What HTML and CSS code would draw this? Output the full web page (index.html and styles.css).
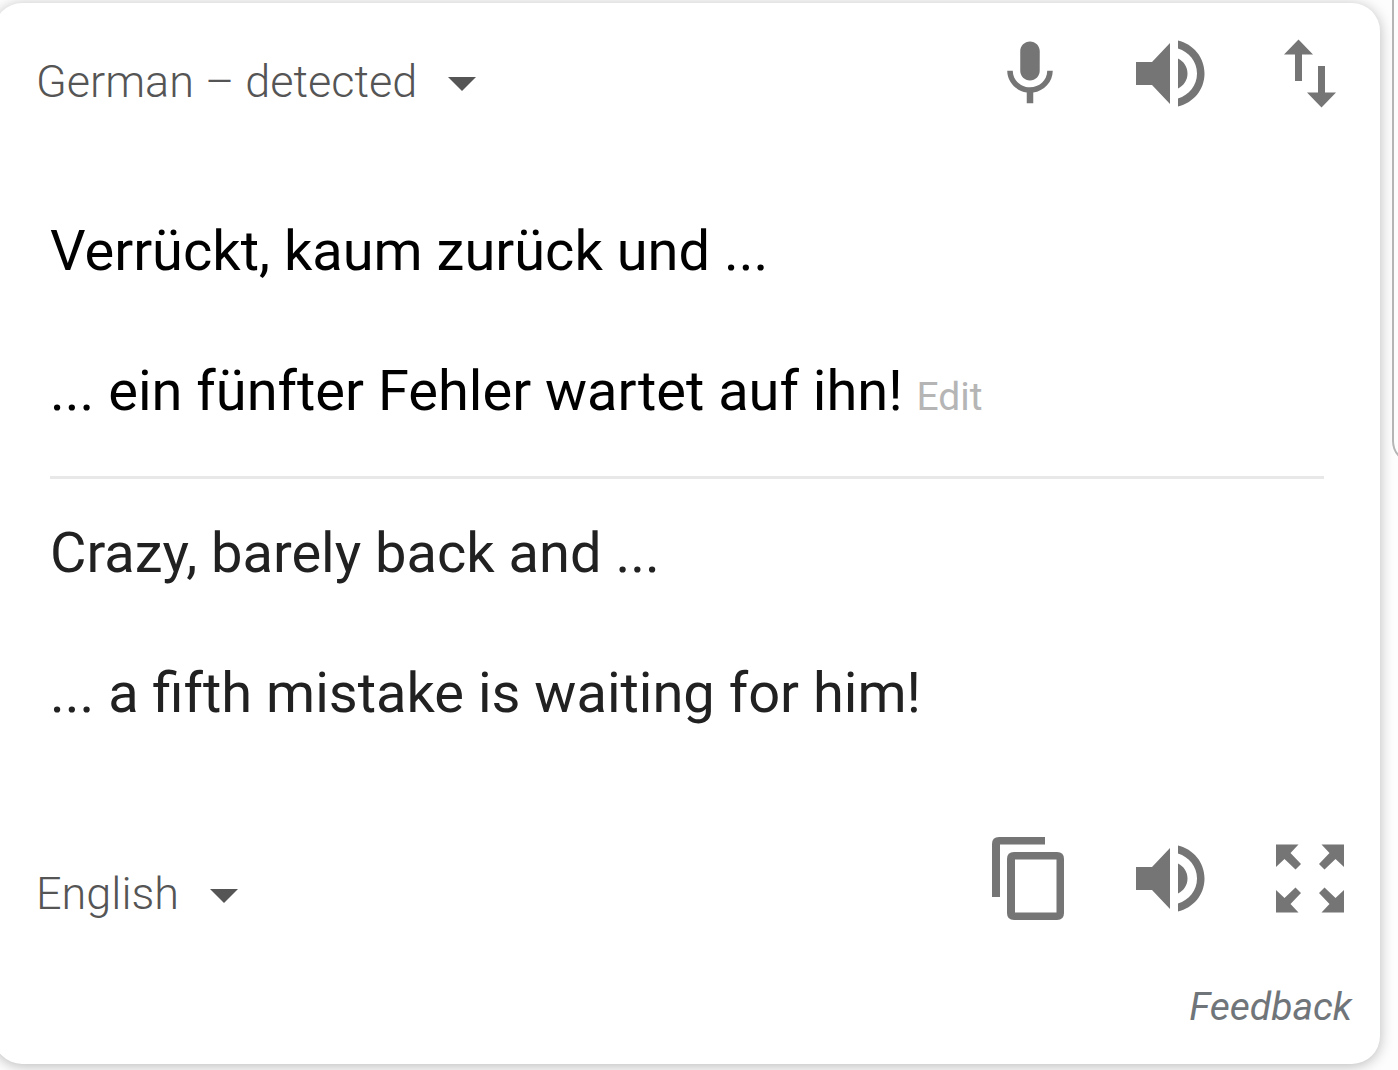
FILE: index.html
```html
<!DOCTYPE html>
<html lang="en">
<head>
<meta charset="utf-8">
<meta name="viewport" content="width=device-width, initial-scale=1">
<title>Translate</title>
<link rel="stylesheet" href="styles.css">
</head>
<body>
<svg class="symbols" aria-hidden="true">
  <symbol id="speaker" viewBox="0 0 78 78">
    <path d="M5 27h16L39 8v61L21 50H5zM47 23.500C53 26.500 56.500 32 56.500 38.500S53 50.500 47 53.500zM47 5.500C62 9 73.500 22 73.500 38.500S62 68 47 71.500V63.500C58 60 66 50.500 66 38.500S58 17 47 13.500z"/>
  </symbol>
  <symbol id="corner-arrow" viewBox="0 0 78 78">
    <path d="M5 4.500h22.500l-8 8.500L30 24l-5.500 5.500L13.500 19 5 27z"/>
  </symbol>
</svg>
<main class="card">
  <header class="bar">
    <div class="language">
      <select class="language-select" aria-label="Source language">
        <option>German – detected</option>
      </select>
      <span class="caret"></span>
    </div>
    <div class="actions">
      <button class="icon-button" type="button" aria-label="Speak">
        <svg class="icon" viewBox="0 0 24 24"><path d="M12 14c1.660 0 2.990-1.340 2.990-3L15 5c0-1.660-1.340-3-3-3S9 3.340 9 5v6c0 1.660 1.340 3 3 3zm5.300-3c0 3-2.540 5.100-5.300 5.100S6.700 14 6.700 11H5c0 3.410 2.720 6.230 6 6.720V21h2v-3.280c3.280-.48 6-3.300 6-6.720h-1.700z"/></svg>
      </button>
      <button class="icon-button" type="button" aria-label="Listen to source">
        <svg class="icon"><use href="#speaker"/></svg>
      </button>
      <button class="icon-button" type="button" aria-label="Swap languages">
        <svg class="icon" viewBox="0 0 78 78"><path d="M27.500 4.500L42 19.500H31V46H24V19.500H13zM47 31h7v26.500h11L50.500 72.500 36 57.500h11z"/></svg>
      </button>
    </div>
  </header>

  <section class="text source" lang="de">
    <p class="line">Verrückt, kaum zurück und ...</p>
    <p class="line">... ein fünfter Fehler wartet auf ihn! <a class="edit" href="#" lang="en">Edit</a></p>
  </section>
  <hr class="divider">
  <section class="text translation">
    <p class="line">Crazy, barely back and ...</p>
    <p class="line">... a fifth mistake is waiting for him!</p>
  </section>

  <div class="bar bar-target">
    <div class="language">
      <select class="language-select" aria-label="Target language">
        <option>English</option>
      </select>
      <span class="caret"></span>
    </div>
    <div class="actions">
      <button class="icon-button" type="button" aria-label="Copy translation">
        <svg class="icon icon-large" viewBox="0 0 90 90"><path d="M7 63V10q0-7 7-7H60v7.500H15V63zM29 18H72q7 0 7 7V79q0 7-7 7H29q-7 0-7-7V25q0-7 7-7zM30 25.500V78.500H71.500V25.500z" fill-rule="evenodd"/></svg>
      </button>
      <button class="icon-button" type="button" aria-label="Listen to translation">
        <svg class="icon"><use href="#speaker"/></svg>
      </button>
      <button class="icon-button" type="button" aria-label="Full screen">
        <svg class="icon" viewBox="0 0 78 78">
          <use href="#corner-arrow" width="78" height="78"/>
          <use href="#corner-arrow" width="78" height="78" transform="matrix(-1 0 0 1 78 0)"/>
          <use href="#corner-arrow" width="78" height="78" transform="matrix(1 0 0 -1 0 77)"/>
          <use href="#corner-arrow" width="78" height="78" transform="matrix(-1 0 0 -1 78 77)"/>
        </svg>
      </button>
    </div>
  </div>
  <footer class="footer"><a class="feedback" href="#">Feedback</a></footer>
</main>
<div class="side-panel"></div>
</body>
</html>
```
FILE: styles.css
```css
* {
  box-sizing: border-box;
}

body {
  position: relative;
  margin: 0;
  padding-top: 3px;
  padding-bottom: 6px;
  overflow-x: hidden;
  background: #fdfdfd;
  font-family: Roboto, "Liberation Sans", sans-serif;
}

.symbols {
  position: absolute;
  width: 0;
  height: 0;
}

.card {
  margin-right: 18px;
  margin-left: -6px;
  padding: 32px 28px 33px 42px;
  border-radius: 28px;
  background: #fff;
  box-shadow: 0 2px 14px rgba(0, 0, 0, 0.27);
}

.bar {
  display: flex;
  align-items: flex-start;
  justify-content: space-between;
  padding-right: 3px;
}

.bar-target {
  margin-top: 112px;
}

.language {
  display: flex;
  align-items: center;
  gap: 30px;
  padding-top: 20px;
  color: #555;
}

.bar-target .language {
  padding-top: 27px;
}

.language-select {
  appearance: none;
  margin: 0;
  padding: 0;
  border: 0;
  background: none;
  color: inherit;
  font: 300 45px/54px Roboto, "Liberation Sans", sans-serif;
}

.caret {
  margin-top: 4px;
  border-top: 14px solid #555;
  border-right: 14px solid transparent;
  border-left: 14px solid transparent;
}

.actions {
  display: flex;
  gap: 62px;
}

.icon-button {
  display: block;
  width: 78px;
  height: 78px;
  padding: 0;
  border: 0;
  background: none;
  color: #757575;
}

.icon {
  display: block;
  width: 78px;
  height: 78px;
  fill: currentColor;
}

.icon-large {
  width: 90px;
  height: 90px;
  margin: -6px;
}

.text {
  display: grid;
  gap: 70px;
  padding-left: 14px;
  font-size: 56px;
  line-height: 70px;
}

.source {
  margin-top: 103px;
  color: #000;
}

.translation {
  color: #212121;
}

.line {
  margin: 0;
}

.edit {
  color: #b5b5b5;
  font-size: 39px;
  line-height: 1;
  text-decoration: none;
}

.divider {
  height: 3px;
  margin: 50px 28px 39px 14px;
  border: 0;
  background: #e8e8e8;
}

.footer {
  display: flex;
  justify-content: flex-end;
  margin-top: 62px;
}

.feedback {
  color: #70757a;
  font-size: 39px;
  font-style: italic;
  line-height: 48px;
  text-decoration: none;
}

.side-panel {
  position: absolute;
  top: -40px;
  right: -40px;
  width: 46px;
  height: 504px;
  border: 2px solid #b5b5b5;
  border-radius: 28px;
}
```
